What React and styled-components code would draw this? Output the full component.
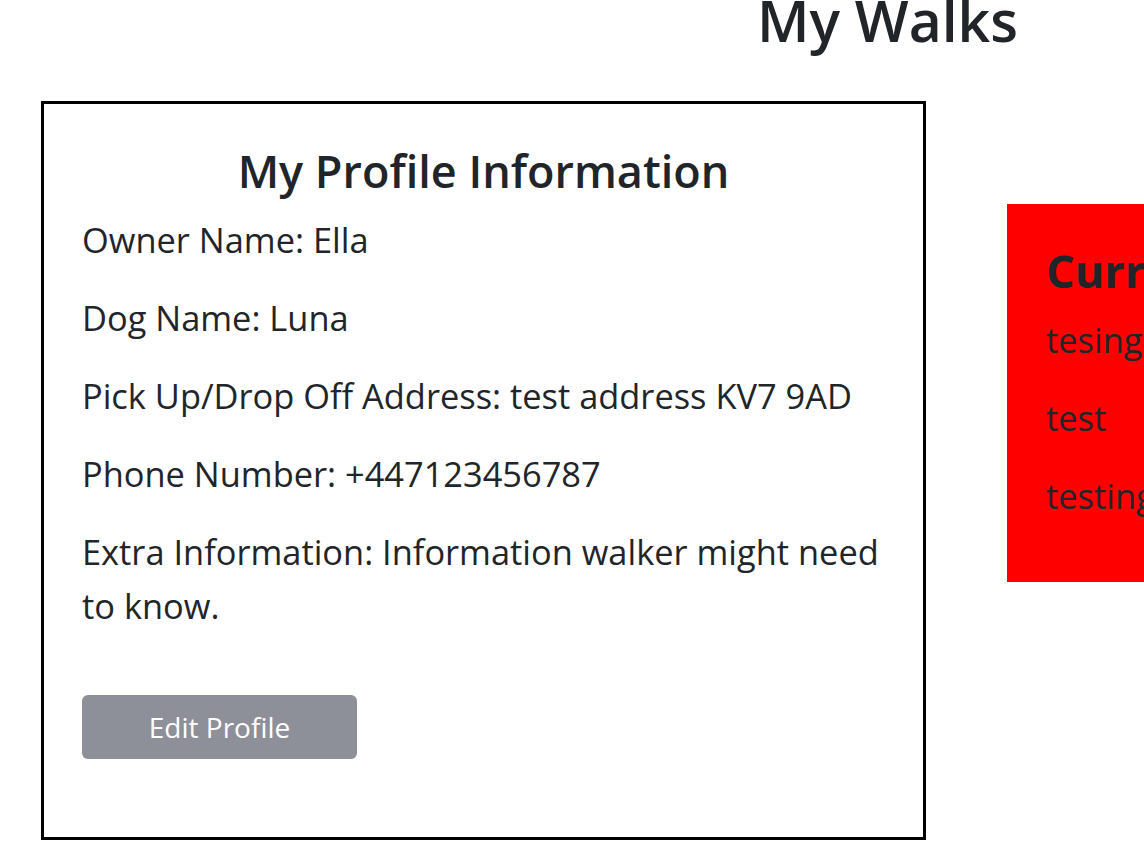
import styled, { createGlobalStyle } from "styled-components"

const GlobalStyle = createGlobalStyle`
  html, body {
    margin: 0;
    padding: 0;
    overflow: hidden;
    background: #fff;
  }
  body {
    font-family: "Open Sans", "Noto Sans", "Liberation Sans", sans-serif;
    color: #212529;
  }
`

const Page = styled.div`
  width: 1144px;
  height: 849px;
  overflow: hidden;
`

const TitleBar = styled.div`
  display: flex;
  justify-content: flex-end;
  padding-right: 126px;
  height: 101px;
`

const Title = styled.h1`
  margin: -14px 0 0;
  font-size: 57px;
  font-weight: 600;
  line-height: 1.2;
`

const Row = styled.div`
  display: flex;
  align-items: flex-start;
  gap: 81px;
  padding-left: 41px;
`

const Card = styled.section`
  box-sizing: border-box;
  flex: none;
  width: ${(p) => p.width}px;
  min-height: ${(p) => p.height}px;
  margin-top: ${(p) => p.offset || 0}px;
  padding: 40px 38px 0;
  background: ${(p) => p.bg || "#fff"};
  border: ${(p) => (p.outlined ? "3px solid #000" : "none")};
`

const CardTitle = styled.h2`
  margin: 0 0 15px;
  font-size: 45px;
  font-weight: ${(p) => (p.bold ? 700 : 600)};
  line-height: 1.2;
  text-align: ${(p) => (p.left ? "left" : "center")};
  white-space: nowrap;
`

const Line = styled.p`
  margin: 0 0 24px;
  font-size: 34.4px;
  line-height: 54px;
  white-space: ${(p) => (p.wrap ? "normal" : "nowrap")};
`

const EditButton = styled.button`
  display: block;
  width: 275px;
  height: 64px;
  margin: 62px 0 76px;
  border: none;
  border-radius: 6px;
  background: #8e9099;
  color: #fff;
  font-family: inherit;
  font-size: 28px;
  cursor: pointer;
`

export default function App() {
  return (
    <Page>
      <GlobalStyle />
      <TitleBar>
        <Title>My Walks</Title>
      </TitleBar>
      <Row>
        <Card outlined width={885} height={739}>
          <CardTitle>My Profile Information</CardTitle>
          <Line>Owner Name: Ella</Line>
          <Line>Dog Name: Luna</Line>
          <Line>Pick Up/Drop Off Address: test address KV7 9AD</Line>
          <Line>Phone Number: +447123456787</Line>
          <Line wrap>Extra Information: Information walker might need to know.</Line>
          <EditButton>Edit Profile</EditButton>
        </Card>
        <Card bg="#ff0000" width={420} height={378} offset={103} style={{ paddingLeft: 39 }}>
          <CardTitle bold left>Current Walks</CardTitle>
          <Line>tesing</Line>
          <Line>test</Line>
          <Line>testing</Line>
        </Card>
      </Row>
    </Page>
  )
}
